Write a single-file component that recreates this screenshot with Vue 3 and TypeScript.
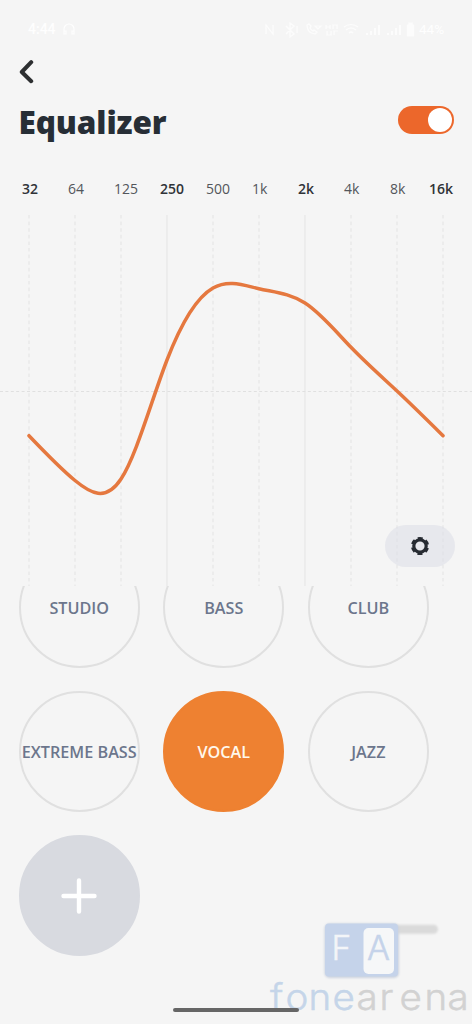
<script setup lang="ts">
import { ref } from 'vue'

interface Band {
  label: string
  strong: boolean
  y: number
}

const CHART_TOP = 215
const STEP = 46
const FIRST_X = 29

const bands: Band[] = [
  { label: '32', strong: true, y: 435.7 },
  { label: '64', strong: false, y: 480.5 },
  { label: '125', strong: false, y: 479 },
  { label: '250', strong: true, y: 360 },
  { label: '500', strong: false, y: 288 },
  { label: '1k', strong: false, y: 288.7 },
  { label: '2k', strong: true, y: 303 },
  { label: '4k', strong: false, y: 347.3 },
  { label: '8k', strong: false, y: 391 },
  { label: '16k', strong: true, y: 435.7 },
]

const lines = bands.map((_, i) => ({ x: FIRST_X + STEP * i, solid: i === 3 || i === 6 }))

/** Natural cubic spline through evenly spaced values, as an SVG path. */
function spline(ys: number[]): string {
  const n = ys.length
  const m: number[] = new Array(n).fill(0)
  const c: number[] = new Array(n).fill(0)
  const d: number[] = new Array(n).fill(0)
  for (let i = 1; i < n - 1; i++) {
    const w = 4 - c[i - 1]
    c[i] = 1 / w
    d[i] = (6 * (ys[i + 1] - 2 * ys[i] + ys[i - 1]) - d[i - 1]) / w
  }
  for (let i = n - 2; i > 0; i--) m[i] = d[i] - c[i] * m[i + 1]
  let path = `M${FIRST_X} ${ys[0]}`
  for (let i = 0; i < n - 1; i++) {
    const delta = ys[i + 1] - ys[i]
    const s0 = delta - (2 * m[i] + m[i + 1]) / 6
    const s1 = delta + (m[i] + 2 * m[i + 1]) / 6
    const x = FIRST_X + STEP * i
    path += ` C${x + STEP / 3} ${(ys[i] + s0 / 3).toFixed(2)} ${x + (STEP * 2) / 3} ${(ys[i + 1] - s1 / 3).toFixed(2)} ${x + STEP} ${ys[i + 1]}`
  }
  return path
}

const curve = spline(bands.map((b) => b.y - CHART_TOP))

const enabled = ref(true)
const presets = ['STUDIO', 'BASS', 'CLUB', 'EXTREME BASS', 'VOCAL', 'JAZZ']
const selected = ref('VOCAL')

const brand = [
  { ch: 'f', x: 270 },
  { ch: 'o', x: 285.5 },
  { ch: 'n', x: 308.5 },
  { ch: 'e', x: 332.5 },
  { ch: 'a', x: 356.5 },
  { ch: 'r', x: 379.5 },
  { ch: 'e', x: 399.5 },
  { ch: 'n', x: 424.5 },
  { ch: 'a', x: 447.5 },
]
</script>

<template>
  <main class="screen">
    <div class="status">
      <span class="time">4:44</span>
      <svg class="phones" width="12" height="13" viewBox="0 0 12 13">
        <path d="M1 11V6a5 5 0 0 1 10 0v5M1 8h2v3H1zM9 8h2v3H9z" />
      </svg>
      <svg class="icons" width="152" height="18" viewBox="264 20 152 18">
        <path d="M266 34v-9l7 9v-9M286 26l8 8-4 3V23l4 3-8 8M297 26v7" />
        <path d="M307 25q0 8 8 9l2-2-3-2-1 1q-2-1-3-3l1-2-2-2zM315 26h6l-3 3z" />
        <path d="M326 25v4m0-2h4m0-2v4m3 0v-4h4v4M327 31v4h4v-4m3 4v-4h4" />
        <path d="M344 27q7-5 14 0M346 30q5-4 10 0M349 33q2-2 4 0" />
        <path class="bars" d="M367 35v-2m4 2v-4m4 4v-7m4 7V25M388 35v-2m4 2v-4m4 4v-7m4 7V25" />
        <path class="fill" d="M407.500 25h1.500v-2h3v2h1.500v11h-6z" />
      </svg>
      <span class="battery">44%</span>
    </div>

    <button class="back" aria-label="Back">
      <svg width="16" height="26" viewBox="0 0 16 26">
        <path d="M12.2 3.2 2.8 13l9.4 9.2" />
      </svg>
    </button>

    <header class="head">
      <h1>Equalizer</h1>
      <button class="toggle" :class="{ on: enabled }" aria-label="Toggle" @click="enabled = !enabled">
        <span class="knob"></span>
      </button>
    </header>

    <div class="bands">
      <span v-for="b in bands" :key="b.label" class="band" :class="{ strong: b.strong }">{{ b.label }}</span>
    </div>

    <section class="chart">
      <svg width="472" height="371" viewBox="0 0 472 371">
        <line
          v-for="l in lines"
          :key="l.x"
          class="grid"
          :class="{ dashed: !l.solid }"
          :x1="l.x"
          :x2="l.x"
          y1="0"
          y2="371"
        />
        <line class="axis" x1="0" x2="472" y1="176.5" y2="176.5" />
        <path class="curve" :d="curve" />
      </svg>
      <button class="settings" aria-label="Settings">
        <svg width="20" height="20" viewBox="-10 -10 20 20">
          <circle class="teeth" r="7.5" />
          <circle class="ring" r="6.2" />
        </svg>
      </button>
    </section>

    <section class="presets">
      <div class="circles">
        <button
          v-for="p in presets"
          :key="p"
          class="preset"
          :class="{ active: p === selected }"
          @click="selected = p"
        >
          {{ p }}
        </button>
        <button class="preset add" aria-label="Add">
          <svg width="36" height="36" viewBox="0 0 36 36"><path d="M18 2.500v31M2.500 18h31" /></svg>
        </button>
      </div>
    </section>

    <svg class="mark" width="208" height="114" viewBox="264 910 208 114">
      <defs>
        <filter id="soft" x="-20%" y="-50%" width="140%" height="200%">
          <feGaussianBlur stdDeviation="1.1" />
        </filter>
      </defs>
      <rect x="390" y="924.7" width="48" height="9" rx="4.5" fill="#dadada" filter="url(#soft)" />
      <rect x="324.5" y="923.5" width="74.5" height="54.5" rx="5" fill="#ccd3df" filter="url(#soft)" />
      <rect x="325" y="923.5" width="73" height="53" rx="4" fill="#c5d3ea" />
      <rect x="363.5" y="928" width="30.5" height="46" rx="5" fill="#f6f7f8" />
      <text class="letter" x="331.5" y="959.5" fill="#f3f5f8" stroke="#f3f5f8">F</text>
      <text
        class="letter"
        x="367"
        y="960"
        fill="#c5d3ea"
        stroke="#c5d3ea"
        textLength="23"
        lengthAdjust="spacingAndGlyphs"
      >A</text>
      <g class="name">
        <text
          v-for="(b, i) in brand"
          :key="i"
          :class="i < 4 ? 'cool' : 'grey'"
          :transform="`translate(${b.x} 1009.5) scale(1.07 1)`"
        >{{ b.ch }}</text>
      </g>
    </svg>
    <div class="home"></div>
  </main>
</template>

<style>
body {
  margin: 0;
  background: #f5f5f5;
}
</style>

<style scoped>
.screen {
  position: relative;
  width: 472px;
  height: 1024px;
  overflow: hidden;
  background: #f5f5f5;
  font-family: 'Open Sans', 'Noto Sans', sans-serif;
  color: #2a2e35;
}
button {
  padding: 0;
  border: 0;
  background: none;
  font: inherit;
  color: inherit;
}
svg {
  display: block;
  flex: none;
}
.status {
  display: flex;
  align-items: center;
  box-sizing: border-box;
  height: 58px;
  padding: 0 27px 0 28px;
  color: #fefefe;
  font: 500 14px Roboto, sans-serif;
}
.status svg {
  fill: none;
  stroke: #fefefe;
  stroke-width: 1.2;
}
.status .fill {
  fill: #fefefe;
}
.status .bars {
  stroke-width: 1.8;
}
.phones {
  margin-left: 7px;
}
.icons {
  margin-left: auto;
  opacity: 0.85;
}
.battery {
  width: 26px;
  margin-left: 3px;
  font-weight: 400;
  font-size: 13.5px;
}
.back {
  display: block;
  margin: 1px 0 0 19px;
  height: 26px;
}
.back path {
  fill: none;
  stroke: #2d2f31;
  stroke-width: 4;
  stroke-linecap: round;
  stroke-linejoin: round;
}
.head {
  display: flex;
  justify-content: space-between;
  align-items: center;
  height: 50px;
  margin-top: 10px;
  padding: 0 18.5px 0 18.5px;
}
h1 {
  margin: 3px 0 0;
  font-size: 31.5px;
  line-height: 44px;
  font-weight: 800;
  letter-spacing: -0.1px;
  color: #272e36;
}
.toggle {
  display: flex;
  align-items: center;
  box-sizing: border-box;
  width: 56px;
  height: 28px;
  padding: 0 2px;
  border-radius: 14px;
  background: #c9ccd2;
}
.toggle.on {
  justify-content: flex-end;
  background: #ec672b;
}
.knob {
  width: 24px;
  height: 24px;
  border-radius: 50%;
  background: #fff;
}
.bands {
  display: flex;
  height: 70px;
  padding-left: 22px;
  font-size: 14px;
  line-height: 88px;
  color: #53565b;
}
.band {
  flex: 0 0 46px;
}
.band:last-child {
  margin-left: -7px;
}
.strong {
  font-weight: 600;
  color: #303338;
}
.chart {
  position: relative;
  height: 371px;
}
.grid {
  stroke: #e7e7e7;
  stroke-width: 1.2;
}
.dashed {
  stroke-dasharray: 3.6 3;
}
.axis {
  stroke: #e0e0e0;
  stroke-width: 1;
  stroke-dasharray: 3 2.4;
}
.curve {
  fill: none;
  stroke: #e5783f;
  stroke-width: 3.5;
  stroke-linecap: round;
}
.settings {
  position: absolute;
  right: 17.5px;
  bottom: 19px;
  display: flex;
  align-items: center;
  justify-content: center;
  width: 70px;
  height: 42px;
  border-radius: 21px;
  background: rgba(218, 220, 230, 0.5);
}
.ring,
.teeth {
  fill: none;
  stroke: #272b32;
}
.ring {
  stroke-width: 3.2;
}
.teeth {
  stroke-width: 3.2;
  stroke-dasharray: 4.6 3.254;
  stroke-dashoffset: 2.3;
  transform: rotate(30deg);
}
.presets {
  height: 438px;
  overflow: hidden;
}
.circles {
  display: grid;
  grid-template-columns: repeat(3, 121px);
  grid-auto-rows: 121px;
  gap: 23px 23.6px;
  margin: -38.7px 0 0 18.7px;
}
.preset {
  display: flex;
  align-items: center;
  justify-content: center;
  box-sizing: border-box;
  border: 2px solid #e0e0e0;
  border-radius: 50%;
  font-size: 16.2px;
  font-weight: 600;
  white-space: nowrap;
  color: #6c768c;
}
.active {
  border-color: #ee8131;
  background: #ee8131;
  color: #fff8ec;
}
.add {
  border-color: #d8dae0;
  background: #d8dae0;
}
.add path {
  stroke: #fff;
  stroke-width: 4.4;
  stroke-linecap: round;
}
.mark {
  position: absolute;
  right: 0;
  bottom: 0;
}
.letter {
  font: 300 33.5px Inter, sans-serif;
  stroke-width: 0.5;
}
.name {
  font: 300 36px Inter, sans-serif;
  stroke-width: 0.5;
}
.cool {
  fill: #c5d5e9;
  stroke: #c5d5e9;
}
.grey {
  fill: #d2d2d2;
  stroke: #d2d2d2;
}
.home {
  position: absolute;
  left: 173px;
  bottom: 12px;
  width: 126px;
  height: 4.5px;
  border-radius: 3px;
  background: #666;
}
</style>
